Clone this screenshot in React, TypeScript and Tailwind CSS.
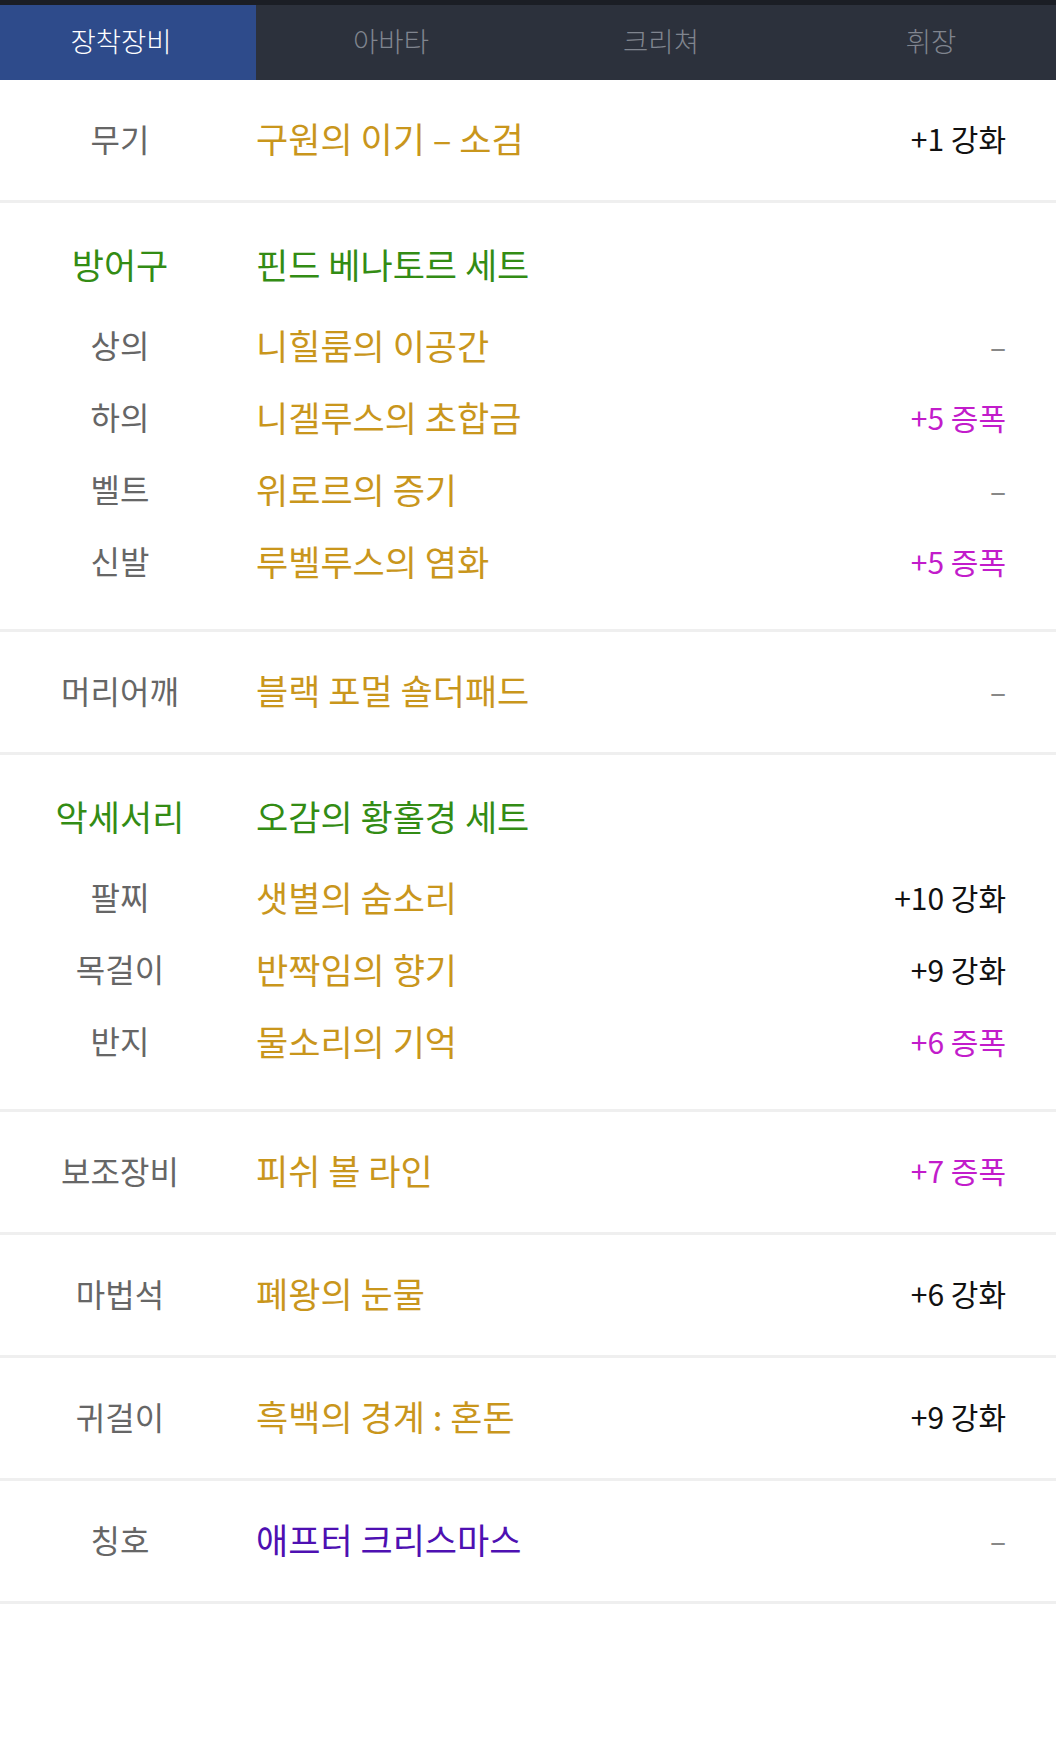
import React from "react";

type Val = { text: string; kind: "enh" | "amp" | "none" };

const F = { fontFamily: '"Noto Sans CJK KR", "Noto Sans", sans-serif' };

function Value({ v }: { v: Val }) {
  if (v.kind === "none") return <span className="text-[30px] leading-[1.2] text-[#888888]">–</span>;
  if (v.kind === "amp") return <span className="text-[30px] leading-[1.2] text-[#c21ccb]">{v.text}</span>;
  return <span className="text-[30px] leading-[1.2] text-[#111111]">{v.text}</span>;
}

function SingleRow({ label, name, v, nameColor = "text-[#c9961c]" }: { label: string; name: string; v: Val; nameColor?: string }) {
  return (
    <div className="flex h-[123px] items-center border-b-[3px] border-[#efefef] pb-[4px]">
      <div className="w-[240px] text-center text-[32px] leading-[1.2] text-[#666666]">{label}</div>
      <div className={`flex-1 pl-[16px] text-[35px] leading-[1.2] ${nameColor}`}>{name}</div>
      <div className="pr-[50px]">
        <Value v={v} />
      </div>
    </div>
  );
}

function SubRow({ label, name, v }: { label: string; name: string; v: Val }) {
  return (
    <div className="flex h-[72px] items-center pb-[5px]">
      <div className="w-[240px] text-center text-[32px] leading-[1.2] text-[#666666]">{label}</div>
      <div className="flex-1 pl-[16px] text-[35px] leading-[1.2] text-[#c9961c]">{name}</div>
      <div className="pr-[50px]">
        <Value v={v} />
      </div>
    </div>
  );
}

function Section({ head, set, rows }: { head: string; set: string; rows: { label: string; name: string; v: Val }[] }) {
  return (
    <div className="flex flex-col border-b-[3px] border-[#efefef] pt-[27px] pb-[30px]">
      <div className="mb-[9px] flex h-[72px] items-center pb-[4px]">
        <div className="w-[240px] text-center text-[35px] leading-[1.2] text-[#338c14]">{head}</div>
        <div className="flex-1 pl-[16px] text-[35px] leading-[1.2] text-[#338c14]">{set}</div>
      </div>
      {rows.map((r) => (
        <SubRow key={r.label} {...r} />
      ))}
    </div>
  );
}

const none: Val = { text: "–", kind: "none" };

export default function App() {
  return (
    <div className="min-h-[1739px] w-[1056px] bg-white" style={F}>
      <div className="h-[5px] bg-[#1b1e25]" />
      <div className="flex h-[75px] overflow-hidden bg-[#2c313c]">
        <div className="flex w-[256px] shrink-0 items-center justify-center bg-[#2e4b8b] pr-[14px] pb-[4px] text-[27.5px] font-light text-white">
          장착장비
        </div>
        <div className="flex w-[270px] shrink-0 items-center justify-center pb-[4px] text-[27.5px] font-light text-[#80858f]">아바타</div>
        <div className="flex w-[270px] shrink-0 items-center justify-center pb-[4px] text-[27.5px] font-light text-[#80858f]">크리쳐</div>
        <div className="flex w-[270px] shrink-0 items-center justify-center pb-[4px] text-[27.5px] font-light text-[#80858f]">휘장</div>
      </div>

      <SingleRow label="무기" name="구원의 이기 – 소검" v={{ text: "+1 강화", kind: "enh" }} />
      <Section
        head="방어구"
        set="핀드 베나토르 세트"
        rows={[
          { label: "상의", name: "니힐룸의 이공간", v: none },
          { label: "하의", name: "니겔루스의 초합금", v: { text: "+5 증폭", kind: "amp" } },
          { label: "벨트", name: "위로르의 증기", v: none },
          { label: "신발", name: "루벨루스의 염화", v: { text: "+5 증폭", kind: "amp" } },
        ]}
      />
      <SingleRow label="머리어깨" name="블랙 포멀 숄더패드" v={none} />
      <Section
        head="악세서리"
        set="오감의 황홀경 세트"
        rows={[
          { label: "팔찌", name: "샛별의 숨소리", v: { text: "+10 강화", kind: "enh" } },
          { label: "목걸이", name: "반짝임의 향기", v: { text: "+9 강화", kind: "enh" } },
          { label: "반지", name: "물소리의 기억", v: { text: "+6 증폭", kind: "amp" } },
        ]}
      />
      <SingleRow label="보조장비" name="피쉬 볼 라인" v={{ text: "+7 증폭", kind: "amp" }} />
      <SingleRow label="마법석" name="폐왕의 눈물" v={{ text: "+6 강화", kind: "enh" }} />
      <SingleRow label="귀걸이" name="흑백의 경계 : 혼돈" v={{ text: "+9 강화", kind: "enh" }} />
      <SingleRow label="칭호" name="애프터 크리스마스" v={none} nameColor="text-[#4e10b2]" />
    </div>
  );
}
